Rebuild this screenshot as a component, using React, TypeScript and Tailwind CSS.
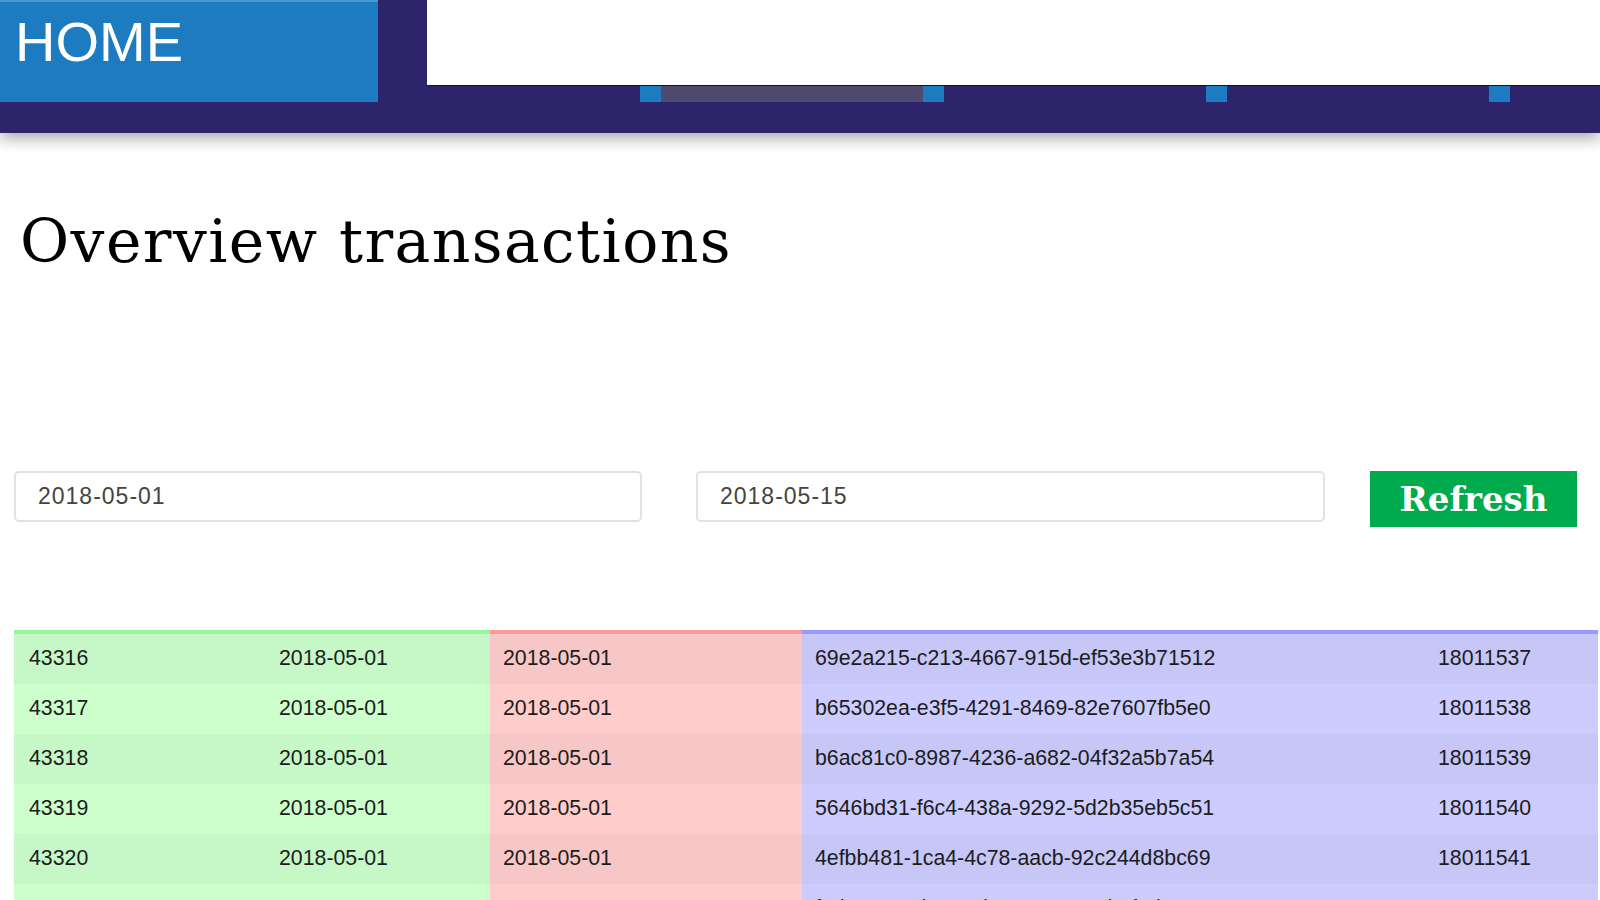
import React from 'react';

type Row = {
  id: string;
  date: string;
  bookDate: string;
  guid: string;
  ref: string;
};

const rows: Row[] = [
  { id: '43316', date: '2018-05-01', bookDate: '2018-05-01', guid: '69e2a215-c213-4667-915d-ef53e3b71512', ref: '18011537' },
  { id: '43317', date: '2018-05-01', bookDate: '2018-05-01', guid: 'b65302ea-e3f5-4291-8469-82e7607fb5e0', ref: '18011538' },
  { id: '43318', date: '2018-05-01', bookDate: '2018-05-01', guid: 'b6ac81c0-8987-4236-a682-04f32a5b7a54', ref: '18011539' },
  { id: '43319', date: '2018-05-01', bookDate: '2018-05-01', guid: '5646bd31-f6c4-438a-9292-5d2b35eb5c51', ref: '18011540' },
  { id: '43320', date: '2018-05-01', bookDate: '2018-05-01', guid: '4efbb481-1ca4-4c78-aacb-92c244d8bc69', ref: '18011541' },
  { id: '43321', date: '2018-05-02', bookDate: '2018-05-02', guid: 'f2d4c7a1-0b3e-4d57-9a1c-6e8b2f4d0a13', ref: '18011542' },
];

// ── Header ────────────────────────────────────────────────────────────────────

const Header: React.FC = () => (
  <header className="relative z-10 flex h-[133px] bg-[#2e246c] shadow-[0_6px_14px_rgba(0,0,0,0.32)]">
    <div className="w-[378px] h-[102px] shrink-0 bg-[#1d7bc1] border-t-2 border-[#4d97cf]">
      <span className="block pl-[15px] pt-[9px] text-[56px] leading-[62px] text-white font-['Liberation_Sans',Arial,sans-serif]">
        HOME
      </span>
    </div>

    <div className="flex-1 flex flex-col">
      <div className="h-[86px] pl-[49px] flex">
        <div className="flex-1 bg-white border-b border-[#140d45]" />
      </div>
      {/* nav markers */}
      <div className="flex h-[16px] pl-[262px]">
        <div className="w-[21px] bg-[#1d7bc1]" />
        <div className="w-[262px] bg-[#4f4a70]" />
        <div className="w-[21px] bg-[#1d7bc1]" />
        <div className="w-[262px]" />
        <div className="w-[21px] bg-[#1d7bc1]" />
        <div className="w-[262px]" />
        <div className="w-[21px] bg-[#1d7bc1]" />
      </div>
    </div>
  </header>
);

// ── Filters ───────────────────────────────────────────────────────────────────

const DateInput: React.FC<{ value: string; width: string }> = ({ value, width }) => (
  <div
    className={`${width} h-[51px] flex items-center pl-[22px] bg-white border-2 border-[#e2e2e2] rounded-[5px] text-[23px] tracking-[1px] text-[#444] font-['Liberation_Sans',Arial,sans-serif]`}
  >
    {value}
  </div>
);

// ── Page ──────────────────────────────────────────────────────────────────────

export default function App() {
  return (
    <div className="w-[1600px] h-[900px] overflow-hidden bg-white">
      <Header />

      <main className="pl-[14px] pr-[2px]">
        <h1 className="pl-[6px] pt-[72px] text-[60px] leading-[72px] text-black font-['DejaVu_Serif',Georgia,serif] tracking-[1.4px]">
          Overview transactions
        </h1>

        <div className="flex items-start mt-[194px]">
          <DateInput value="2018-05-01" width="w-[628px]" />
          <div className="ml-[54px]">
            <DateInput value="2018-05-15" width="w-[629px]" />
          </div>
          <button className="ml-[45px] w-[207px] h-[56px] bg-[#00ab4e] text-white text-[34px] font-bold font-['DejaVu_Serif',Georgia,serif] leading-none">
            Refresh
          </button>
        </div>

        <table className="mt-[103px] table-fixed border-collapse w-[1584px] text-[21.3px] text-[#1c1c1c] font-['Liberation_Sans',Arial,sans-serif]">
          <colgroup>
            <col className="w-[251px]" />
            <col className="w-[225px]" />
            <col className="w-[312px]" />
            <col className="w-[622px]" />
            <col className="w-[174px]" />
          </colgroup>
          <tbody>
            <tr className="h-[4px]">
              <td className="p-0 bg-[#99f599]" />
              <td className="p-0 bg-[#99f599]" />
              <td className="p-0 bg-[#ff9999]" />
              <td className="p-0 bg-[#9999ff]" />
              <td className="p-0 bg-[#9999ff]" />
            </tr>
            {rows.map((r, i) => {
              const odd = i % 2 === 0;
              const green = odd ? 'bg-[#c6f7c6]' : 'bg-[#ccffcc]';
              const red = odd ? 'bg-[#f7c6c6]' : 'bg-[#ffcccc]';
              const blue = odd ? 'bg-[#c6c6f7]' : 'bg-[#ccccff]';
              return (
                <tr key={r.id} className="h-[50px]">
                  <td className={`pl-[15px] ${green}`}>{r.id}</td>
                  <td className={`pl-[14px] ${green}`}>{r.date}</td>
                  <td className={`pl-[13px] ${red}`}>{r.bookDate}</td>
                  <td className={`pl-[13px] ${blue}`}>{r.guid}</td>
                  <td className={`pl-[14px] ${blue}`}>{r.ref}</td>
                </tr>
              );
            })}
          </tbody>
        </table>
      </main>
    </div>
  );
}
